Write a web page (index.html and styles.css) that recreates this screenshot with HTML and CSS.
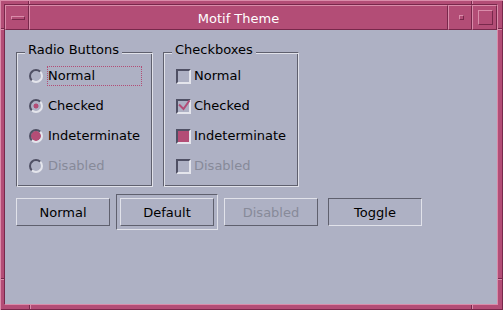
FILE: index.html
```html
<!DOCTYPE html>
<html lang="en">
<head>
  <meta charset="UTF-8">
  <title>Motif Theme</title>
  <link rel="stylesheet" href="styles.css">
</head>
<body>
  <div class="window">
    <div class="frame">
      <div class="titlebar">
        <div class="tb-btn"><span class="menu-bar"></span></div>
        <div class="title">Motif Theme</div>
        <div class="tb-btn"><span class="min-dot"></span></div>
        <div class="tb-btn max"><span class="max-box"></span></div>
      </div>

      <div class="client">
        <div class="groups">
          <div class="group">
            <div class="group-title">Radio Buttons</div>
            <div class="item"><span class="radio"></span><span class="label focus">Normal</span></div>
            <div class="item"><span class="radio checked"></span><span class="label">Checked</span></div>
            <div class="item"><span class="radio mixed"></span><span class="label">Indeterminate</span></div>
            <div class="item disabled"><span class="radio"></span><span class="label">Disabled</span></div>
          </div>

          <div class="group checks">
            <div class="group-title">Checkboxes</div>
            <div class="item"><span class="box"></span><span class="label">Normal</span></div>
            <div class="item">
              <span class="box">
                <svg width="15" height="15" viewBox="0 0 15 15"><path d="M3 5.5 L7.5 10 L13.5 1.5" fill="none" stroke="#b34d76" stroke-width="2"/></svg>
              </span>
              <span class="label">Checked</span>
            </div>
            <div class="item"><span class="box mixed"></span><span class="label">Indeterminate</span></div>
            <div class="item disabled"><span class="box"></span><span class="label">Disabled</span></div>
          </div>
        </div>

        <div class="buttons">
          <button class="btn">Normal</button>
          <div class="default-ring"><button class="btn">Default</button></div>
          <button class="btn" disabled>Disabled</button>
          <button class="btn pressed">Toggle</button>
        </div>
      </div>
    </div>
  </div>
</body>
</html>
```

FILE: styles.css
```css
* { box-sizing: border-box; margin: 0; padding: 0; }
html, body {
  width: 503px; height: 310px;
  overflow: hidden;
  font-family: 'DejaVu Sans', sans-serif;
  font-size: 13px;
  color: #000;
}

/* outer motif frame, with the resize-corner ticks */
.window {
  width: 503px; height: 310px;
  padding: 4px 5px 5px 4px;
  background-color: #b34d76;
  background-image:
    linear-gradient(to right, #78284b 1px, #da8caa 1px),
    linear-gradient(to right, #78284b 1px, #da8caa 1px),
    linear-gradient(to right, #78284b 1px, #da8caa 1px),
    linear-gradient(to right, #78284b 1px, #da8caa 1px),
    linear-gradient(#78284b 1px, #da8caa 1px),
    linear-gradient(#78284b 1px, #da8caa 1px),
    linear-gradient(#78284b 1px, #da8caa 1px),
    linear-gradient(#78284b 1px, #da8caa 1px);
  background-size: 2px 5px, 2px 5px, 2px 6px, 2px 6px, 5px 2px, 5px 2px, 6px 2px, 6px 2px;
  background-position: 28px 0, 471px 0, 29px 100%, 471px 100%, 0 28px, 0 278px, 100% 28px, 100% 278px;
  background-repeat: no-repeat;
  box-shadow: inset 1px 1px #da8caa, inset -1px -1px #78284b;
}
.frame {
  height: 100%;
  display: flex; flex-direction: column;
  border: 1px solid;
  border-color: #78284b #da8caa #da8caa #78284b;
}

.titlebar {
  display: flex;
  height: 25px;
}
.tb-btn, .title {
  display: flex; align-items: center; justify-content: center;
  border: 1px solid;
  border-color: #da8caa #78284b #78284b #da8caa;
}
.tb-btn { width: 24px; }
.tb-btn.max { width: 25px; }
.title {
  flex: 1;
  color: #fff;
  padding-top: 1px;
}
.menu-bar, .min-dot, .max-box {
  border: 1px solid;
  border-color: #da8caa #78284b #78284b #da8caa;
}
.menu-bar { width: 14px; height: 4px; margin-left: 2px; }
.min-dot { width: 5px; height: 5px; margin-left: 2px; }
.max-box { width: 15px; height: 15px; margin-left: 2px; }

.client {
  flex: 1;
  background-color: #aeb1c4;
  padding: 22px 11px 0;
  display: flex; flex-direction: column; align-items: flex-start;
  gap: 11px;
}
.groups {
  display: flex;
  gap: 10px;
}
.group {
  width: 137px;
  padding: 0 10px 5px 12px;
  border: 1px solid;
  border-color: #5f606e #e1e2ea #e1e2ea #5f606e;
  box-shadow: inset 1px 1px #e1e2ea, inset -1px -1px #5f606e;
}
.group.checks { width: 136px; }
.group-title {
  width: fit-content;
  margin: -11px 0 3px -4px;
  padding: 0 3px;
  line-height: 16px;
  background-color: #aeb1c4;
}

.item {
  display: flex; align-items: center;
  height: 30px;
}
.label {
  flex: 1;
  height: 20px;
  line-height: 18px;
  border: 1px dotted transparent;
}
.label.focus { border-color: #b34d76; }
.item.disabled .label { color: #878a99; }

.radio {
  width: 14px; height: 14px;
  margin-right: 4px;
  border-radius: 50%;
  border: 2px solid;
  border-color: #4f5064 #e4e5ec #e4e5ec #4f5064;
}
.radio.checked {
  background: radial-gradient(circle, #b34d76 2.2px, transparent 2.8px);
}
.radio.mixed {
  background: radial-gradient(circle, #b34d76 4.6px, transparent 5.2px);
}

.box {
  width: 15px; height: 15px;
  margin-right: 2px;
  border: 2px solid;
  border-color: #4f5064 #e4e5ec #e4e5ec #4f5064;
  position: relative;
}
.box svg {
  position: absolute;
  left: -2px; top: -2px;
}
.box.mixed { background-color: #b34d76; }

.buttons {
  display: flex; align-items: center;
  gap: 10px;
}
.btn {
  width: 94px; height: 28px;
  font-family: inherit; font-size: 13px;
  color: #000;
  background: transparent;
  border: 1px solid;
  border-color: #e1e2ea #5f606e #5f606e #e1e2ea;
}
.btn:disabled { color: #878a99; }
.btn.pressed { border-color: #5f606e #e1e2ea #e1e2ea #5f606e; }
.default-ring {
  margin: -4px;
  padding: 3px;
  border: 1px solid;
  border-color: #5f606e #e1e2ea #e1e2ea #5f606e;
}
.default-ring .btn { display: block; }
```
